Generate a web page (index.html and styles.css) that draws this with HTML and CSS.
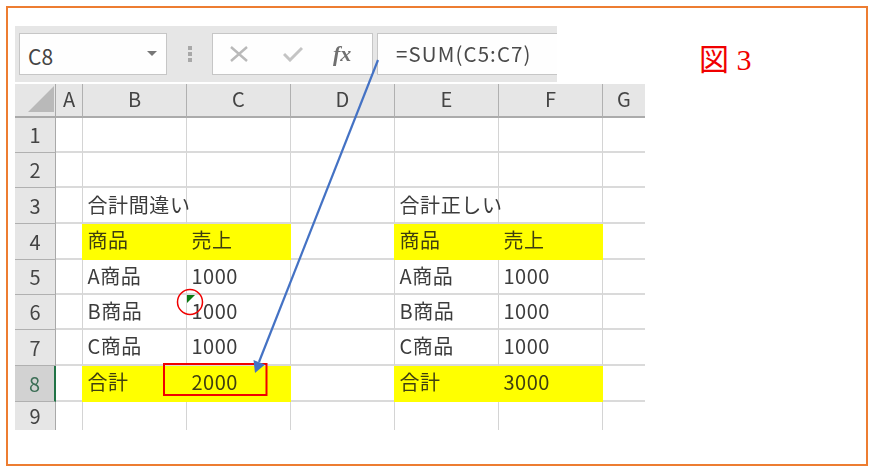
FILE: index.html
```html
<!DOCTYPE html>
<html lang="ja">
<head>
<meta charset="utf-8">
<title>図 3</title>
<link rel="stylesheet" href="styles.css">
</head>
<body>
<main class="frame">
  <section class="excel">
    <div class="toolbar">
      <div class="namebox"><span>C8</span><i class="caret"></i></div>
      <div class="grip"><i></i><i></i><i></i></div>
      <div class="buttons">
        <svg class="ico" width="18" height="16" viewBox="0 0 18 16"><path d="M1 1 L17 15 M17 1 L1 15" stroke="#b9b9b9" stroke-width="2.4" fill="none"/></svg>
        <svg class="ico tick" width="20" height="16" viewBox="0 0 20 16"><path d="M1 8 L7 14 L19 2" stroke="#c4c4c4" stroke-width="3" fill="none"/></svg>
        <span class="fx">fx</span>
      </div>
      <div class="formula">=SUM(C5:C7)</div>
    </div>
    <div class="sheet">
      <div class="corner"><svg width="26" height="26" viewBox="0 0 26 26"><path d="M0 26 L26 0 V26 Z" fill="#b9b9b9"/></svg></div>
      <div class="ch">A</div><div class="ch">B</div><div class="ch">C</div><div class="ch">D</div><div class="ch">E</div><div class="ch">F</div><div class="ch last">G</div>

      <div class="rh">1</div><div class="c"></div><div class="c"></div><div class="c"></div><div class="c"></div><div class="c"></div><div class="c"></div><div class="c last"></div>
      <div class="rh">2</div><div class="c"></div><div class="c"></div><div class="c"></div><div class="c"></div><div class="c"></div><div class="c"></div><div class="c last"></div>
      <div class="rh">3</div><div class="c"></div><div class="c nb">合計間違い</div><div class="c"></div><div class="c"></div><div class="c nb">合計正しい</div><div class="c"></div><div class="c last"></div>
      <div class="rh">4</div><div class="c"></div><div class="c y">商品</div><div class="c y">売上</div><div class="c"></div><div class="c y">商品</div><div class="c y">売上</div><div class="c last"></div>
      <div class="rh">5</div><div class="c"></div><div class="c">A商品</div><div class="c">1000</div><div class="c"></div><div class="c">A商品</div><div class="c">1000</div><div class="c last"></div>
      <div class="rh">6</div><div class="c"></div><div class="c">B商品</div><div class="c">1000</div><div class="c"></div><div class="c">B商品</div><div class="c">1000</div><div class="c last"></div>
      <div class="rh">7</div><div class="c"></div><div class="c">C商品</div><div class="c">1000</div><div class="c"></div><div class="c">C商品</div><div class="c">1000</div><div class="c last"></div>
      <div class="rh active">8</div><div class="c"></div><div class="c y">合計</div><div class="c y">2000</div><div class="c"></div><div class="c y">合計</div><div class="c y">3000</div><div class="c last"></div>
      <div class="rh bottom">9</div><div class="c bottom"></div><div class="c bottom"></div><div class="c bottom"></div><div class="c bottom"></div><div class="c bottom"></div><div class="c bottom"></div><div class="c bottom last"></div>
    </div>
  </section>
  <h1 class="title">図 3</h1>
</main>
<svg class="marks" width="871" height="473" viewBox="0 0 871 473">
  <path d="M187 295 H195 L187 303 Z" fill="#0b7a12"/>
  <circle cx="190" cy="302" r="12.5" fill="none" stroke="#f00000" stroke-width="1.5"/>
  <rect x="164" y="364" width="102.500" height="31" fill="none" stroke="#f00000" stroke-width="2"/>
  <path d="M378 60 L259 362" stroke="#4472c4" stroke-width="2.2" fill="none"/>
  <path d="M255 373 L253.500 360 L265 364.500 Z" fill="#4472c4"/>
</svg>
</body>
</html>
```
FILE: styles.css
```css
* { box-sizing: border-box; }
html, body { margin: 0; padding: 0; background: #fff; }
body { position: relative; width: 871px; height: 473px; overflow: hidden; font-family: "Noto Sans CJK JP", "Noto Sans", sans-serif; }
.frame { display: flex; width: 862px; height: 460px; margin: 6px 0 0 6px; padding: 18px 0 0 7px; border: 2px solid #ed7d31; }
.excel { width: 630px; flex: none; filter: blur(0.45px); }
.toolbar { display: flex; align-items: center; width: 542px; height: 56px; margin-bottom: 2px; padding-left: 4px; background: #e6e6e6; }
.namebox { display: flex; align-items: center; justify-content: space-between; width: 148px; height: 42px; padding: 3px 9px 0 8px; border: 1.500px solid #c6c6c6; background: #fefefe; font-size: 21px; color: #444; }
.caret { width: 0; height: 0; margin-bottom: 4px; border: 5px solid transparent; border-top: 5px solid #777; border-bottom: 0; }
.grip { display: flex; flex-direction: column; gap: 2px; width: 45px; align-items: center; }
.grip i { width: 4px; height: 4px; background: #a8a8a8; }
.buttons { display: flex; align-items: center; width: 161px; height: 42px; padding: 0 0 1px 17px; gap: 35px; border: 1.500px solid #c6c6c6; background: #fefefe; }
.ico { flex: none; }
.fx { margin-left: -5px; font-family: "Liberation Serif", serif; font-style: italic; font-weight: 700; font-size: 22px; color: #707070; }
.formula { display: flex; align-items: center; flex: 1; height: 42px; margin-left: 4px; padding: 0 0 3px 18px; border: 1.500px solid #c6c6c6; border-right: 0; background: #fefefe; font-size: 20.500px; letter-spacing: 1.1px; color: #4a4a4a; }
.sheet { display: grid; grid-template-columns: 41px 27px 104px 104px 104px 104px 104px 42px; grid-template-rows: 34px 35px 35px 36px 36px 35px 35px 36px 36px 28px; width: 630px; font-size: 20px; line-height: 1; color: #3c3c3c; }
.corner, .ch, .rh { display: flex; align-items: center; justify-content: center; background: #e6e6e6; color: #444; }
.corner { align-items: flex-end; justify-content: flex-end; padding: 0 1px 4px 0; border-right: 1px solid #a9a9a9; border-bottom: 2px solid #a9a9a9; }
.ch { padding-bottom: 3px; border-right: 1px solid #b0b0b0; border-bottom: 2px solid #ababab; }
.ch.last { border-right: 0; }
.rh { border-right: 1px solid #a9a9a9; border-bottom: 1px solid #b0b0b0; }
.rh.active { background: #d2d2d2; border-right: 2px solid #217346; color: #3d6f57; }
.c { display: flex; align-items: center; padding: 0 0 2px 4.500px; border-right: 1.500px solid #d4d4d4; border-bottom: 2px solid #dadada; letter-spacing: 0.5px; white-space: nowrap; }
.c.last { border-right: 0; }
.rh.bottom, .c.bottom { border-bottom: 0; }
.c.nb { padding-bottom: 0; letter-spacing: 0.6px; }
.c.y { background: #ffff00; border-color: #ffff00; color: #3f3f10; box-shadow: -1px 0 0 #ffff00; }
.title { margin: 14px 0 0 54px; font-family: "Liberation Serif", "Noto Sans CJK JP", serif; font-weight: 400; font-size: 30px; line-height: 1.3; color: #f00000; white-space: nowrap; }
.marks { position: absolute; left: 0; top: 0; pointer-events: none; }
```
